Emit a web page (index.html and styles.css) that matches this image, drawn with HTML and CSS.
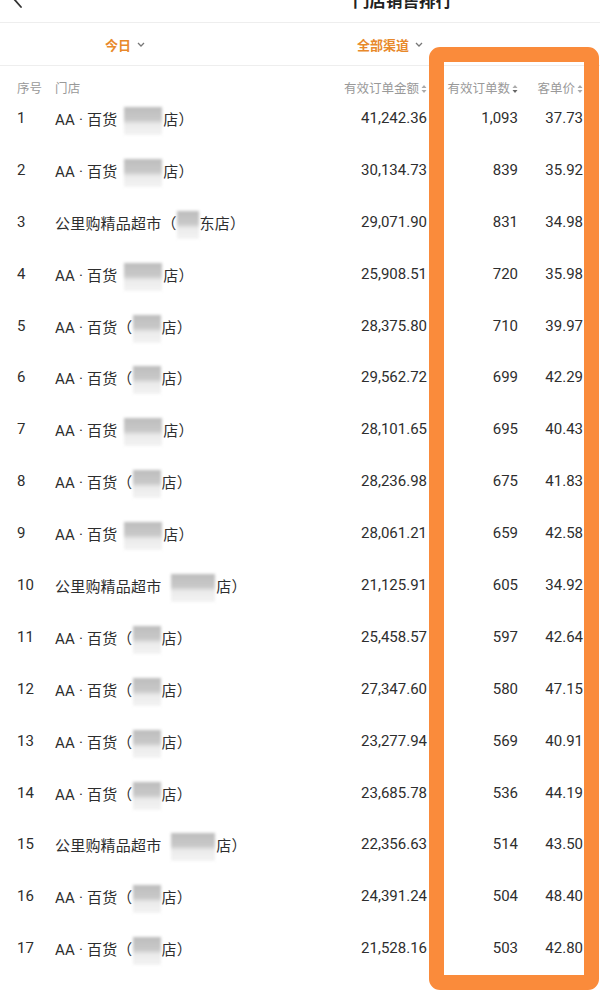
FILE: index.html
```html
<!DOCTYPE html>
<html lang="zh-CN">
<head>
<meta charset="utf-8">
<title>门店销售排行</title>
<link rel="stylesheet" href="styles.css">
</head>
<body>
<div class="page">
  <header class="topbar">
    <svg class="back" width="12" height="18" viewBox="0 0 12 18"><path d="M9 1 L2 9 L9 17" fill="none" stroke="#333" stroke-width="1.8" stroke-linecap="round" stroke-linejoin="round"/></svg>
    <h1 class="title">门店销售排行</h1>
  </header>
  <nav class="filters">
    <div class="filter">今日 <svg class="chev" width="8" height="5" viewBox="0 0 8 5"><path d="M1 1 L4 4 L7 1" fill="none" stroke="#777" stroke-width="1.3"/></svg></div>
    <div class="filter">全部渠道 <svg class="chev" width="8" height="5" viewBox="0 0 8 5"><path d="M1 1 L4 4 L7 1" fill="none" stroke="#777" stroke-width="1.3"/></svg></div>
  </nav>
  <section class="table">
    <div class="row head">
      <div class="c-no">序号</div>
      <div class="c-name">门店</div>
      <div class="c-num">有效订单金额<svg class="sort" width="6" height="10" viewBox="0 0 6 10"><path d="M3 1 L5.5 4 L0.5 4Z M3 9 L5.5 6 L0.5 6Z" fill="#aaa"/></svg></div>
      <div class="c-num">有效订单数<svg class="sort" width="6" height="10" viewBox="0 0 6 10"><path d="M3 1 L5.5 4 L0.5 4Z" fill="#aaa"/><path d="M3 9 L5.5 6 L0.5 6Z" fill="#666"/></svg></div>
      <div class="c-num">客单价<svg class="sort" width="6" height="10" viewBox="0 0 6 10"><path d="M3 1 L5.5 4 L0.5 4Z M3 9 L5.5 6 L0.5 6Z" fill="#aaa"/></svg></div>
    </div>

    <div class="row"><div class="c-no">1</div><div class="c-name">AA · 百货 <span class="blur b1"></span>店）</div><div class="c-num">41,242.36</div><div class="c-num">1,093</div><div class="c-num">37.73</div></div>
    <div class="row"><div class="c-no">2</div><div class="c-name">AA · 百货 <span class="blur b1"></span>店）</div><div class="c-num">30,134.73</div><div class="c-num">839</div><div class="c-num">35.92</div></div>
    <div class="row"><div class="c-no">3</div><div class="c-name">公里购精品超市（<span class="blur b3"></span>东店）</div><div class="c-num">29,071.90</div><div class="c-num">831</div><div class="c-num">34.98</div></div>
    <div class="row"><div class="c-no">4</div><div class="c-name">AA · 百货 <span class="blur b1"></span>店）</div><div class="c-num">25,908.51</div><div class="c-num">720</div><div class="c-num">35.98</div></div>
    <div class="row"><div class="c-no">5</div><div class="c-name">AA · 百货（<span class="blur b2"></span>店）</div><div class="c-num">28,375.80</div><div class="c-num">710</div><div class="c-num">39.97</div></div>
    <div class="row"><div class="c-no">6</div><div class="c-name">AA · 百货（<span class="blur b2"></span>店）</div><div class="c-num">29,562.72</div><div class="c-num">699</div><div class="c-num">42.29</div></div>
    <div class="row"><div class="c-no">7</div><div class="c-name">AA · 百货 <span class="blur b1"></span>店）</div><div class="c-num">28,101.65</div><div class="c-num">695</div><div class="c-num">40.43</div></div>
    <div class="row"><div class="c-no">8</div><div class="c-name">AA · 百货（<span class="blur b2"></span>店）</div><div class="c-num">28,236.98</div><div class="c-num">675</div><div class="c-num">41.83</div></div>
    <div class="row"><div class="c-no">9</div><div class="c-name">AA · 百货 <span class="blur b1"></span>店）</div><div class="c-num">28,061.21</div><div class="c-num">659</div><div class="c-num">42.58</div></div>
    <div class="row"><div class="c-no">10</div><div class="c-name">公里购精品超市 <span class="blur b4"></span>店）</div><div class="c-num">21,125.91</div><div class="c-num">605</div><div class="c-num">34.92</div></div>
    <div class="row"><div class="c-no">11</div><div class="c-name">AA · 百货（<span class="blur b2"></span>店）</div><div class="c-num">25,458.57</div><div class="c-num">597</div><div class="c-num">42.64</div></div>
    <div class="row"><div class="c-no">12</div><div class="c-name">AA · 百货（<span class="blur b2"></span>店）</div><div class="c-num">27,347.60</div><div class="c-num">580</div><div class="c-num">47.15</div></div>
    <div class="row"><div class="c-no">13</div><div class="c-name">AA · 百货（<span class="blur b2"></span>店）</div><div class="c-num">23,277.94</div><div class="c-num">569</div><div class="c-num">40.91</div></div>
    <div class="row"><div class="c-no">14</div><div class="c-name">AA · 百货（<span class="blur b2"></span>店）</div><div class="c-num">23,685.78</div><div class="c-num">536</div><div class="c-num">44.19</div></div>
    <div class="row"><div class="c-no">15</div><div class="c-name">公里购精品超市 <span class="blur b4"></span>店）</div><div class="c-num">22,356.63</div><div class="c-num">514</div><div class="c-num">43.50</div></div>
    <div class="row"><div class="c-no">16</div><div class="c-name">AA · 百货（<span class="blur b2"></span>店）</div><div class="c-num">24,391.24</div><div class="c-num">504</div><div class="c-num">48.40</div></div>
    <div class="row"><div class="c-no">17</div><div class="c-name">AA · 百货（<span class="blur b2"></span>店）</div><div class="c-num">21,528.16</div><div class="c-num">503</div><div class="c-num">42.80</div></div>
  </section>
  <div class="highlight"></div>
</div>
</body>
</html>
```

FILE: styles.css
```css
* { box-sizing: border-box; }
html, body { margin: 0; padding: 0; background: #fff; }
body {
  font-family: "Roboto", "Noto Sans CJK SC", sans-serif;
  color: #2e2e2e;
  width: 600px;
  height: 992px;
  overflow: hidden;
}
.page { position: relative; width: 600px; height: 992px; }

.topbar {
  height: 23px;
  overflow: hidden;
  display: flex;
  align-items: flex-start;
  border-bottom: 1px solid #eee;
}
.back { margin: -10px 0 0 12px; flex: none; }
.title {
  margin: -10px 0 0 329px;
  font-size: 16.5px;
  line-height: 24px;
  font-weight: 700;
  color: #222;
}

.filters {
  height: 43px;
  display: flex;
  align-items: center;
  gap: 212px;
  padding-left: 105px;
  border-bottom: 1px solid #eee;
}
.filter {
  display: flex;
  align-items: center;
  gap: 6px;
  font-size: 13px;
  font-weight: 700;
  color: #e8892b;
}
.chev { display: block; }

.table { padding-top: 11px; }
.row {
  display: grid;
  grid-template-columns: 38px 1fr 100px 91px 65px;
  padding: 4px 17px 0 17px;
  height: 51.9px;
  font-size: 15px;
  line-height: 22px;
  align-items: start;
}
.row.head {
  height: 26px;
  padding-top: 2px;
  font-size: 12.5px;
  line-height: 20px;
  color: #999;
}
.c-no { white-space: nowrap; }
.c-name { white-space: nowrap; letter-spacing: 0.2px; }
.c-num {
  text-align: right;
  white-space: nowrap;
  display: flex;
  justify-content: flex-end;
  align-items: center;
}
.head .c-num { gap: 2px; }
.sort { display: block; }

.blur {
  display: inline-block;
  vertical-align: -10px;
  height: 28px;
  background: linear-gradient(#bdbdbd 0, #c8c8c8 45%, #ebebeb 62%, #f3f3f3 100%);
  filter: blur(1.5px);
  margin-right: 1px;
}
.b1 { width: 38px; margin-left: 3px; }
.b2 { width: 28px; }
.b3 { width: 22px; }
.b4 { width: 44px; margin-left: 6px; }

.highlight {
  position: absolute;
  left: 429px;
  top: 47px;
  width: 170px;
  height: 943px;
  border: 15px solid #fa8b3b;
  border-radius: 11px;
  pointer-events: none;
}
```
